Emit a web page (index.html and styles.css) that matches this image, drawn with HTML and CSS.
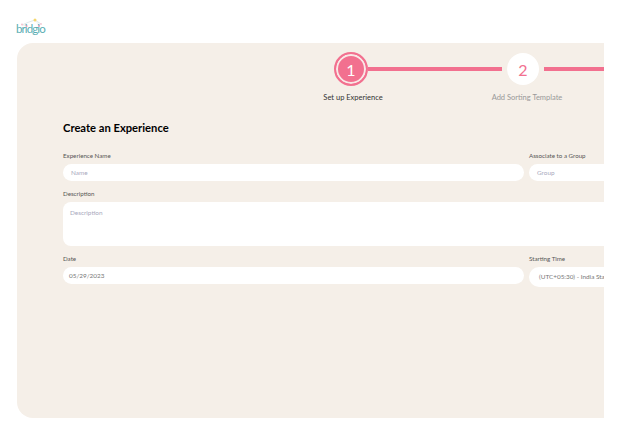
FILE: index.html
```html
<!DOCTYPE html>
<html lang="en">
<head>
  <meta charset="UTF-8" />
  <meta name="viewport" content="width=device-width, initial-scale=1" />
  <title>Bridgio - Create an Experience</title>
  <link rel="stylesheet" href="styles.css">
</head>
<body>
  <header class="topbar">
    <svg class="logo-mark" width="30" height="10" viewBox="0 0 30 10">
      <path d="M6 7 L13 4 L19 2 L25 6" fill="none" stroke="#dfeaec" stroke-width="1" />
      <path d="M6 7 L12 8 M19 2 L24 8" fill="none" stroke="#eef3f3" stroke-width="1" />
      <circle cx="19" cy="2" r="1.5" fill="#f5d76e" />
      <circle cx="6" cy="6.5" r="1.1" fill="#f6c6d3" />
      <circle cx="10.5" cy="8" r="1" fill="#f29ab5" />
      <circle cx="23" cy="8" r="1" fill="#f29ab5" />
      <circle cx="25" cy="6" r="0.9" fill="#f6c6d3" />
    </svg>
    <div class="logo-text">bridgio</div>
  </header>

  <main class="card">
    <div class="stepper">
      <div class="step active">
        <div class="circle"><span>1</span></div>
        <div class="step-label">Set up Experience</div>
      </div>
      <div class="step">
        <div class="circle"><span>2</span></div>
        <div class="step-label">Add Sorting Template</div>
      </div>
    </div>

    <h1 class="title">Create an Experience</h1>

    <form class="form">
      <div class="row">
        <div class="field main">
          <label>Experience Name</label>
          <div class="input placeholder">Name</div>
        </div>
        <div class="field side">
          <label>Associate to a Group</label>
          <div class="input placeholder">Group</div>
        </div>
      </div>

      <div class="field">
        <label>Description</label>
        <div class="textarea placeholder">Description</div>
      </div>

      <div class="row">
        <div class="field main">
          <label>Date</label>
          <div class="input date">05/29/2023</div>
        </div>
        <div class="field side">
          <label>Starting Time</label>
          <div class="input select">(UTC+05:30) - India Standard Time</div>
        </div>
      </div>
    </form>
  </main>
</body>
</html>
```

FILE: styles.css
```css
body {
  margin: 0;
  width: 622px;
  height: 436px;
  overflow: hidden;
  background-color: #fff;
  font-family: "Lato", Arial, sans-serif;
  color: #333;
}

.topbar {
  height: 43px;
  padding-left: 16px;
  box-sizing: border-box;
  padding-top: 18px;
}

.logo-mark {
  display: block;
}

.logo-text {
  font-size: 11.5px;
  line-height: 11px;
  letter-spacing: -0.9px;
  color: #5aaeb3;
  margin-top: -5px;
}

.card {
  width: 587px;
  height: 375px;
  margin-left: 17px;
  box-sizing: border-box;
  background-color: #f5efe8;
  border-radius: 16px 0 0 16px;
  overflow: hidden;
  padding: 9px 0 0 46px;
}

.stepper {
  display: flex;
  margin-left: 202px;
}

.step {
  width: 172px;
  flex-shrink: 0;
  display: flex;
  flex-direction: column;
  align-items: center;
  position: relative;
}

.step::after {
  content: "";
  position: absolute;
  top: 15px;
  left: 103px;
  width: 134px;
  height: 4px;
  background-color: #f2708f;
}

.step:not(.active)::after {
  left: 107px;
}

.circle {
  width: 32px;
  height: 32px;
  margin: 1px;
  flex-shrink: 0;
  border-radius: 50%;
  background-color: #fff;
  color: #f2708f;
  font-size: 16px;
  display: flex;
  align-items: center;
  justify-content: center;
}

.step.active .circle {
  width: 30px;
  height: 30px;
  margin: 0;
  border: 2px solid #f2708f;
  box-shadow: inset 0 0 0 2px #f9e8e6;
  background-color: #f2708f;
  color: #fff;
}

.step-label {
  margin-top: 6px;
  margin-left: 8px;
  font-size: 7.5px;
  line-height: 11px;
  color: #999;
  white-space: nowrap;
}

.step.active .step-label {
  margin-left: 4px;
  color: #333;
}

.title {
  margin: 17px 0 0;
  font-size: 11.2px;
  line-height: 16px;
  font-weight: 700;
  color: #000;
}

.form {
  width: 700px;
  margin-top: 12px;
  display: flex;
  flex-direction: column;
  gap: 5px;
}

.row {
  display: flex;
  gap: 5px;
}

.field {
  display: flex;
  flex-direction: column;
}

.field label {
  font-size: 6.2px;
  line-height: 16px;
  height: 16px;
  color: #555;
}

.main {
  width: 461px;
  flex-shrink: 0;
}

.side {
  flex: 1;
}

.input {
  height: 17px;
  box-sizing: border-box;
  border-radius: 9px;
  background-color: #fff;
  padding-left: 8px;
  font-size: 6.4px;
  line-height: 17px;
  white-space: nowrap;
}

.date {
  padding-left: 6px;
  color: #777;
}

.select {
  height: 20px;
  border-radius: 10px;
  padding-left: 10px;
  line-height: 20px;
  color: #777;
}

.textarea {
  height: 44px;
  box-sizing: border-box;
  border-radius: 8px;
  background-color: #fff;
  padding: 6px 7px;
  font-size: 6.4px;
  line-height: 9px;
}

.placeholder {
  color: #a9a9bd;
}
```
